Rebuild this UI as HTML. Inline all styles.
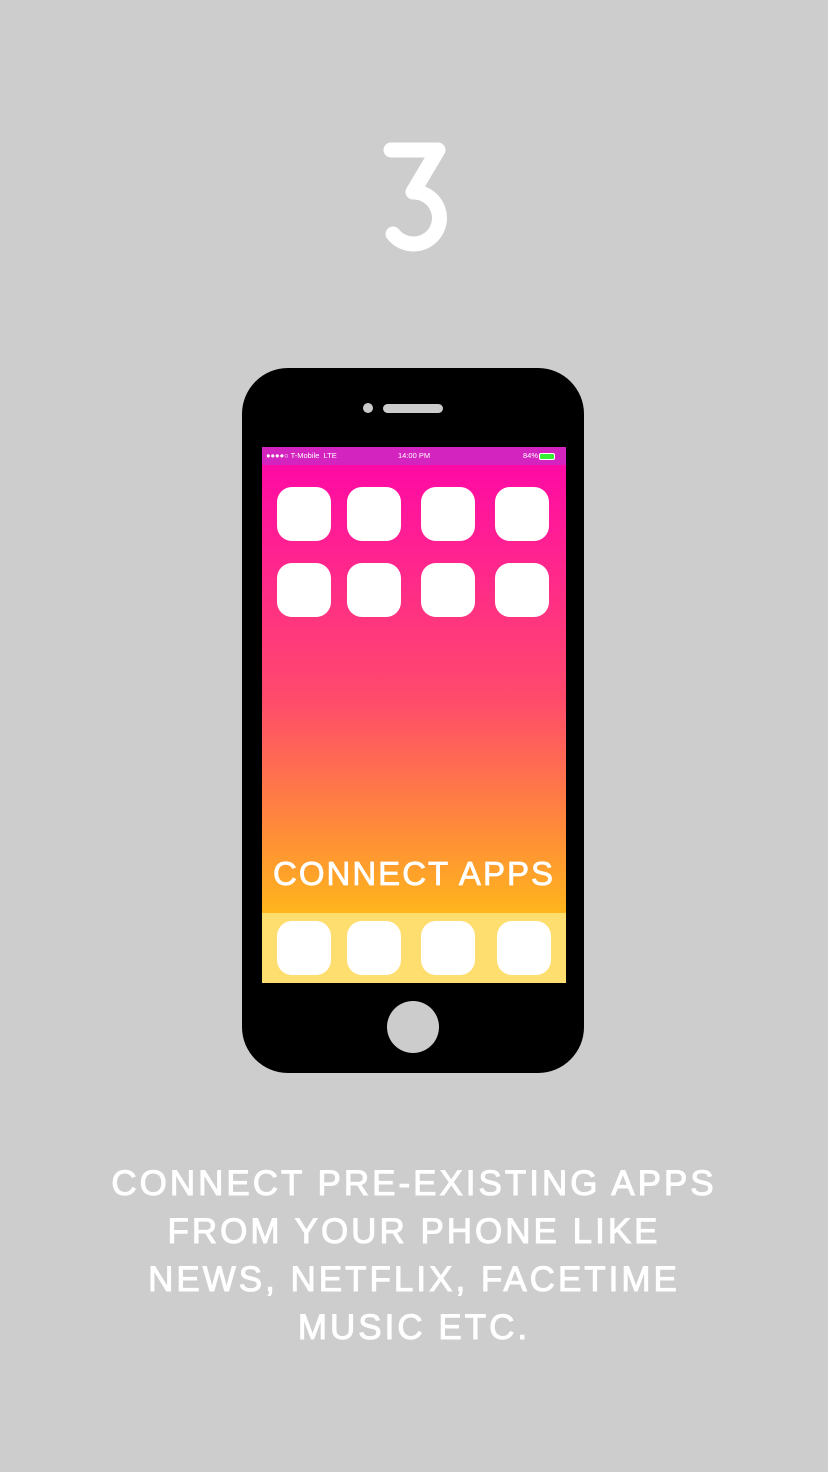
<!DOCTYPE html>
<html><head><meta charset="utf-8"><style>
body{margin:0;width:828px;height:1472px;background:#cdcdcd;position:relative;overflow:hidden;font-family:"Liberation Sans",sans-serif}
.phone{position:absolute;left:242px;top:368px;width:342px;height:705px;background:#000;border-radius:46px}
.screen{position:absolute;left:262px;top:447px;width:304px;height:536px;background:linear-gradient(#ff0aa5 18px,#ff4a6c 250px,#ff8a3a 380px,#ffb51c 466px);}
.sb{position:absolute;left:0;top:0;width:304px;height:18px;background:#d424c0;color:#fff;font-size:7.5px;line-height:18px}
.dock{position:absolute;left:0;top:466px;width:304px;height:70px;background:#ffde70}
.ic{position:absolute;width:54px;height:54px;background:#fff;border-radius:15px}
.t{position:absolute;left:0;width:828px;text-align:center;color:#fff;font-size:35px;letter-spacing:3px;-webkit-text-stroke:1px #fff}
</style></head><body>
<svg width="828" height="300" style="position:absolute;left:0;top:0">
<path d="M391 150 L438 150 L413 192 A26 26 0 1 1 393 234" fill="none" stroke="#fff" stroke-width="15" stroke-linecap="round" stroke-linejoin="round"/>
</svg>
<div class="phone"></div>
<div style="position:absolute;left:363px;top:403px;width:10px;height:10px;border-radius:50%;background:#ccc"></div>
<div style="position:absolute;left:383px;top:404px;width:60px;height:9px;border-radius:5px;background:#ccc"></div>
<div style="position:absolute;left:387px;top:1001px;width:52px;height:52px;border-radius:50%;background:#ccc"></div>
<div class="screen">
<div class="sb"><span style="position:absolute;left:4px">●●●●○ T-Mobile &nbsp;LTE</span><span style="position:absolute;left:136px">14:00 PM</span><span style="position:absolute;left:261px">84%<span style="display:inline-block;width:14px;height:5px;background:#3e3;border:1px solid #fff;border-radius:2px;vertical-align:middle;margin-left:1px"></span></span></div>
<div class="ic" style="left:15px;top:40px"></div><div class="ic" style="left:85px;top:40px"></div><div class="ic" style="left:159px;top:40px"></div><div class="ic" style="left:233px;top:40px"></div>
<div class="ic" style="left:15px;top:116px"></div><div class="ic" style="left:85px;top:116px"></div><div class="ic" style="left:159px;top:116px"></div><div class="ic" style="left:233px;top:116px"></div>
<div style="position:absolute;left:0;top:408px;width:304px;text-align:center;color:#fff;font-size:33px;letter-spacing:2px;-webkit-text-stroke:.8px #fff">CONNECT APPS</div>
<div class="dock">
<div class="ic" style="left:15px;top:8px"></div><div class="ic" style="left:85px;top:8px"></div><div class="ic" style="left:159px;top:8px"></div><div class="ic" style="left:235px;top:8px"></div>
</div></div>
<div class="t" style="top:1164px">CONNECT PRE-EXISTING APPS</div>
<div class="t" style="top:1212px">FROM YOUR PHONE LIKE</div>
<div class="t" style="top:1260px">NEWS, NETFLIX, FACETIME</div>
<div class="t" style="top:1308px">MUSIC ETC.</div>
</body></html>
